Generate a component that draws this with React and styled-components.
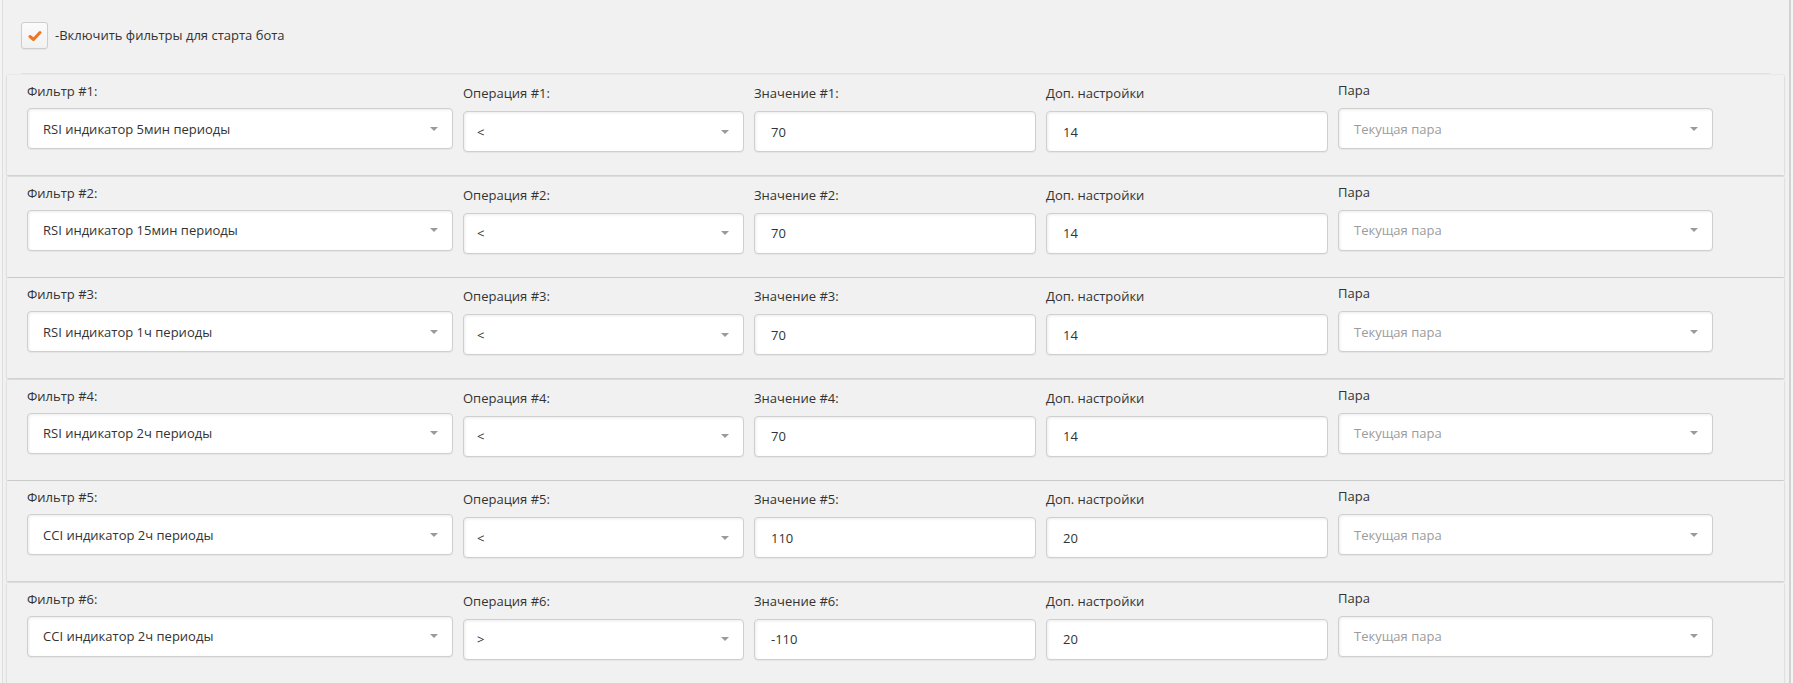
import React from "react";
import styled, { createGlobalStyle } from "styled-components";

const Global = createGlobalStyle`
  html, body { margin: 0; padding: 0; background: #f4f4f4; }
  body { font-family: "Open Sans", "Liberation Sans", sans-serif; font-size: 13px; color: #333; }
  * { box-sizing: border-box; }
`;

const Panel = styled.div`
  margin-left: 2px;
  width: 1789px;
  height: 683px;
  overflow: hidden;
  background: #f1f1f1;
  border-left: 1px solid #dedede;
  border-right: 2px solid #d2d2d2;
`;

const Header = styled.div`
  display: flex;
  align-items: flex-start;
  gap: 7px;
  padding: 22px 0 0 18px;
  height: 73px;
`;

const CheckBox = styled.div`
  width: 27px;
  height: 27px;
  border: 1px solid #cdcdcd;
  border-radius: 3px;
  background: linear-gradient(#fbfbfb, #f1f1f1);
  display: flex;
  align-items: center;
  justify-content: center;
  box-shadow: 0 1px 1px rgba(0, 0, 0, 0.05);
`;

const CheckLabel = styled.span`
  line-height: 27px;
  color: #333;
`;

const Separator = styled.div`
  margin: 0 19px 1px 18px;
  height: 1px;
  background: #e2e2e2;
`;

const Card = styled.div`
  margin-left: 4px;
  width: 1777px;
  height: 100px;
  margin-bottom: 1.5px;
  background: #f1f1f1;
  box-shadow: 0 1px 2px rgba(0, 0, 0, 0.16), 0 0 1px rgba(0, 0, 0, 0.12);
  padding-left: 20px;
  display: grid;
  grid-template-columns: 426px 281px 282px 282px 375px;
  column-gap: 10px;
  align-items: start;
`;

const Field = styled.div`
  display: flex;
  flex-direction: column;
  padding-top: ${(p) => p.$top}px;
`;

const Label = styled.div`
  height: ${(p) => p.$h}px;
  line-height: 18px;
  color: #333;
`;

const Box = styled.div`
  height: 41px;
  background: #fff;
  border: 1px solid #cfcfcf;
  border-radius: 4px;
  box-shadow: inset 1px 1px 3px rgba(0, 0, 0, 0.08), 0 1px 1px rgba(0, 0, 0, 0.05);
  display: flex;
  align-items: center;
  padding: 0 14px 0 ${(p) => p.$pl || 15}px;
  color: ${(p) => (p.$muted ? "#9c9c9c" : "#333")};
`;

const Value = styled.span`
  flex: 1;
  white-space: nowrap;
`;

const Arrow = styled.span`
  width: 0;
  height: 0;
  border-left: 4px solid transparent;
  border-right: 4px solid transparent;
  border-top: 4px solid #9a9a9a;
`;

const rows = [
  { f: "RSI индикатор 5мин периоды", op: "<", v: "70", d: "14" },
  { f: "RSI индикатор 15мин периоды", op: "<", v: "70", d: "14" },
  { f: "RSI индикатор 1ч периоды", op: "<", v: "70", d: "14" },
  { f: "RSI индикатор 2ч периоды", op: "<", v: "70", d: "14" },
  { f: "CCI индикатор 2ч периоды", op: "<", v: "110", d: "20" },
  { f: "CCI индикатор 2ч периоды", op: ">", v: "-110", d: "20" },
];

function Select({ children, muted, pl }) {
  return (
    <Box $muted={muted} $pl={pl}>
      <Value>{children}</Value>
      <Arrow />
    </Box>
  );
}

export default function App() {
  return (
    <>
      <Global />
      <Panel>
        <Header>
          <CheckBox>
            <svg width="14" height="12" viewBox="0 0 14 12">
              <polyline points="2,6.5 5.5,9.5 12,2.5" fill="none" stroke="#f07422" strokeWidth="3" strokeLinecap="round" strokeLinejoin="round" />
            </svg>
          </CheckBox>
          <CheckLabel>-Включить фильтры для старта бота</CheckLabel>
        </Header>
        <Separator />
        {rows.map((r, i) => (
          <Card key={i}>
            <Field $top={7}>
              <Label $h={26}>Фильтр #{i + 1}:</Label>
              <Select>{r.f}</Select>
            </Field>
            <Field $top={9}>
              <Label $h={27}>Операция #{i + 1}:</Label>
              <Select pl={13}>{r.op}</Select>
            </Field>
            <Field $top={9}>
              <Label $h={27}>Значение #{i + 1}:</Label>
              <Box $pl={16}><Value>{r.v}</Value></Box>
            </Field>
            <Field $top={9}>
              <Label $h={27}>Доп. настройки</Label>
              <Box $pl={16}><Value>{r.d}</Value></Box>
            </Field>
            <Field $top={6}>
              <Label $h={27}>Пара</Label>
              <Select muted>Текущая пара</Select>
            </Field>
          </Card>
        ))}
      </Panel>
    </>
  );
}
